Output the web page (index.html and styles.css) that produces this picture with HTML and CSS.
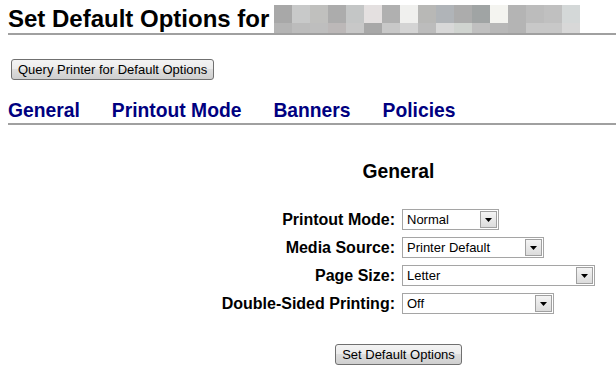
FILE: index.html
```html
<html>
<head>
	<title>Set Default Options</title>
	<link rel="stylesheet" href="styles.css">
</head>
<body>
	<h2 class="title">Set Default Options for <span class="masked"></span></h2>

	<form class="query">
		<input type="button" class="btn" value="Query Printer for Default Options">
	</form>

	<h3 class="tabs">
		<a href="#general">General</a>
		<a href="#printout">Printout Mode</a>
		<a href="#banners">Banners</a>
		<a href="#policies">Policies</a>
	</h3>

	<form class="panel">
		<h3 class="section">General</h3>
		<div class="fields">
			<label for="mode">Printout Mode:</label>
			<span class="combo w-mode">
				<select id="mode"><option>Normal</option></select>
				<span class="arrow"><svg width="7" height="4" viewBox="0 0 7 4"><path d="M0 0h7L3.5 4z"/></svg></span>
			</span>

			<label for="source">Media Source:</label>
			<span class="combo w-source">
				<select id="source"><option>Printer Default</option></select>
				<span class="arrow"><svg width="7" height="4" viewBox="0 0 7 4"><path d="M0 0h7L3.5 4z"/></svg></span>
			</span>

			<label for="size">Page Size:</label>
			<span class="combo w-size">
				<select id="size"><option>Letter</option></select>
				<span class="arrow"><svg width="7" height="4" viewBox="0 0 7 4"><path d="M0 0h7L3.5 4z"/></svg></span>
			</span>

			<label for="duplex">Double-Sided Printing:</label>
			<span class="combo w-duplex">
				<select id="duplex"><option>Off</option></select>
				<span class="arrow"><svg width="7" height="4" viewBox="0 0 7 4"><path d="M0 0h7L3.5 4z"/></svg></span>
			</span>
		</div>
		<div class="submit">
			<input type="button" class="btn" value="Set Default Options">
		</div>
	</form>
</body>
</html>
```

FILE: styles.css
```css
* {
	box-sizing: border-box;
}

body{
	margin: 5px 0 0 8px;
	background: #ffffff;
	font-family: "Liberation Sans", Arial, sans-serif;
	color: #000000;
	overflow: hidden;
}

h2.title{
	margin: 0;
	font-size: 24px;
	font-weight: bold;
	border-bottom: 2px solid #a0a0a0;
}

span.masked{
	display: inline-block;
	width: 306px;
	height: 28px;
	margin-left: -2px;
	vertical-align: top;
	background:
		linear-gradient(to right,
			#a8a8a8 0 18px, #c8c9c9 18px 36px, #c0c0be 36px 54px, #acacac 54px 72px,
			#c4c6c6 72px 90px, #e4e0e0 90px 108px, #b0b0b0 108px 126px, #f0f0ee 126px 144px,
			#b8b8b6 144px 162px, #b0b4b8 162px 180px, #acacac 180px 198px, #a0a4a4 198px 216px,
			#f4f4f0 216px 234px, #b4b4b4 234px 252px, #bcbcbc 252px 270px, #c0c0c0 270px 288px,
			#d4d8d8 288px 306px) top / 100% 18px no-repeat,
		linear-gradient(to right,
			#b4b4b4 0 18px, #bcbcbc 18px 36px, #bebebe 36px 54px, #bcb8b8 54px 72px,
			#c8c8c8 72px 90px, #a8a8a8 90px 108px, #c8c8c8 108px 126px, #d4d4d4 126px 144px,
			#bcbcbc 144px 162px, #d8d8d8 162px 180px, #d0d4d0 180px 198px, #c0c0c0 198px 216px,
			#b8b8b8 216px 234px, #b4b4b4 234px 252px, #c8c8c8 252px 270px, #c8c8c8 270px 288px,
			#d8d8d8 288px 306px) bottom / 100% 10px no-repeat;
}

form.query{
	margin: 24px 0 0 3px;
}

input.btn{
	font-family: "Liberation Sans", Arial, sans-serif;
	font-size: 13px;
	color: #000000;
	height: 21px;
	padding: 0 6px;
	border: 1px solid #707070;
	border-radius: 3px;
	background: linear-gradient(#f3f3f3 0%, #ebebeb 50%, #dddddd 50%, #cfcfcf 100%);
}

h3.tabs{
	display: flex;
	gap: 32px;
	margin: 20px 0 0 0;
	padding-bottom: 1px;
	font-size: 19.3px;
	font-weight: bold;
	border-bottom: 2px solid #a0a0a0;
}

h3.tabs a{
	color: #000080;
	text-decoration: none;
}

form.panel{
	margin: 36px 0 0 193px;
	width: 395px;
}

h3.section{
	margin: 0;
	text-align: center;
	font-size: 19.3px;
	font-weight: bold;
}

div.fields{
	display: grid;
	grid-template-columns: 194px auto;
	column-gap: 7px;
	row-gap: 7px;
	margin-top: 26px;
}

div.fields label{
	align-self: center;
	text-align: right;
	font-size: 16px;
	font-weight: bold;
}

span.combo{
	position: relative;
	display: inline-flex;
	height: 21px;
}

span.combo select{
	appearance: none;
	-webkit-appearance: none;
	width: 100%;
	height: 21px;
	margin: 0;
	padding: 0 0 0 4px;
	border: 1px solid #a5a5a5;
	border-radius: 0;
	background: #ffffff;
	font-family: "Liberation Sans", Arial, sans-serif;
	font-size: 13px;
	color: #000000;
}

span.combo .arrow{
	position: absolute;
	top: 2px;
	right: 2px;
	width: 17px;
	height: 17px;
	display: flex;
	align-items: center;
	justify-content: center;
	border: 1px solid #a0a0a0;
	background: linear-gradient(#f4f4f4, #dcdcdc);
	pointer-events: none;
}

.w-mode{ width: 97px; }
.w-source{ width: 142px; }
.w-size{ width: 193px; }
.w-duplex{ width: 152px; }

div.submit{
	margin-top: 30px;
	text-align: center;
}
```
